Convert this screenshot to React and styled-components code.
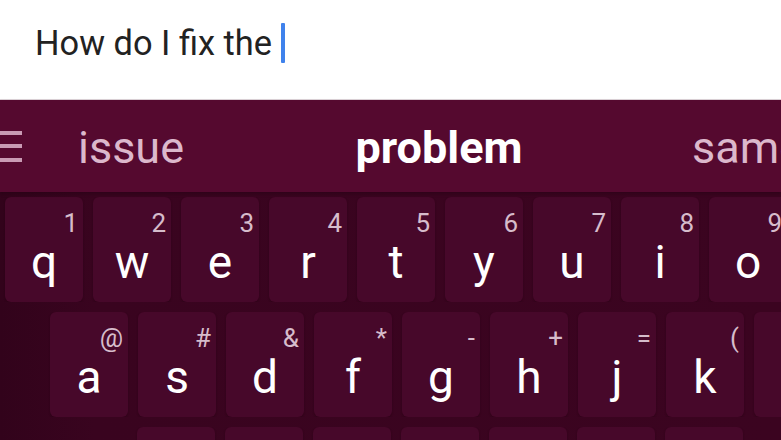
import React from "react";
import styled, { createGlobalStyle } from "styled-components";

const Global = createGlobalStyle`
  html, body { margin: 0; padding: 0; background: #ffffff; }
  body { width: 781px; height: 440px; overflow: hidden; font-family: Roboto, "Noto Sans", "Liberation Sans", sans-serif; }
  #root { width: 781px; height: 440px; }
`;

const Screen = styled.div`
  width: 781px;
  height: 440px;
  display: flex;
  flex-direction: column;
  overflow: hidden;
`;

const InputArea = styled.div`
  flex-shrink: 0;
  box-sizing: border-box;
  border-bottom: 1px solid #ddd3d8;
  height: 100px;
  display: flex;
  align-items: flex-start;
  padding: 23px 0 0 35px;
  background: #ffffff;
`;

const InputText = styled.span`
  font-size: 34.4px;
  line-height: 40px;
  color: #222222;
  white-space: pre;
`;

const Caret = styled.span`
  display: inline-block;
  width: 4px;
  height: 40px;
  margin-left: 9px;
  border-radius: 1px;
  background: #3f82ec;
`;

const SuggestionBar = styled.div`
  height: 92px;
  flex-shrink: 0;
  display: flex;
  align-items: center;
  background: #55092f;
  overflow: hidden;
  box-shadow: 0 2px 3px rgba(30, 0, 15, 0.35);
  position: relative;
  z-index: 1;
`;

const MenuIcon = styled.svg`
  flex-shrink: 0;
  width: 22px;
  height: 32px;
  margin-top: 2px;
`;

const Slots = styled.div`
  display: flex;
  margin-left: -45px;
  padding-top: 4px;
`;

const Slot = styled.div`
  flex: 0 0 ${(p) => p.$width}px;
  box-sizing: border-box;
  padding-left: ${(p) => p.$indent || 0}px;
  text-align: ${(p) => (p.$indent ? "left" : "center")};
  font-size: 45px;
  line-height: 44px;
  white-space: nowrap;
  font-weight: ${(p) => (p.$active ? 700 : 400)};
  color: ${(p) => (p.$active ? "#ffffff" : "#dcb8cc")};
`;

const Keyboard = styled.div`
  flex: 1;
  display: flex;
  flex-direction: column;
  gap: 10px;
  padding-top: 5px;
  background: linear-gradient(90deg, #32031b 0%, #39041f 12%, #3b0420 100%);
`;

const Row = styled.div`
  display: flex;
  gap: 10px;
  padding-left: ${(p) => p.$offset}px;
  overflow: hidden;
  flex-shrink: 0;
`;

const Key = styled.div`
  position: relative;
  flex: 0 0 78px;
  height: 105px;
  box-sizing: border-box;
  border-radius: 6px;
  background: #47082a;
  box-shadow: 0 1px 2px rgba(25, 0, 12, 0.35);
  display: flex;
  justify-content: center;
  padding-top: 42px;
`;

const Letter = styled.span`
  font-size: 46px;
  line-height: 46px;
  color: #ffffff;
`;

const Hint = styled.span`
  position: absolute;
  top: 13px;
  right: 5px;
  font-size: 26px;
  line-height: 26px;
  color: #d6bccb;
`;

const row1 = [
  ["q", "1"], ["w", "2"], ["e", "3"], ["r", "4"], ["t", "5"],
  ["y", "6"], ["u", "7"], ["i", "8"], ["o", "9"], ["p", "0"],
];
const row2 = [
  ["a", "@"], ["s", "#"], ["d", "&"], ["f", "*"], ["g", "-"],
  ["h", "+"], ["j", "="], ["k", "("], ["l", ")"],
];
const row3 = [
  ["z", "_"], ["x", "$"], ["c", "\""], ["v", "'"], ["b", ":"],
  ["n", ";"], ["m", "/"],
];

function KeyRow({ keys, offset }) {
  return (
    <Row $offset={offset}>
      {keys.map(([l, h]) => (
        <Key key={l}>
          <Hint>{h}</Hint>
          <Letter>{l}</Letter>
        </Key>
      ))}
    </Row>
  );
}

export default function App() {
  return (
    <Screen>
      <Global />
      <InputArea>
        <InputText>How do I fix the</InputText>
        <Caret />
      </InputArea>
      <SuggestionBar>
        <MenuIcon viewBox="0 0 22 32">
          <rect x="0" y="0" width="22" height="4" fill="#c99bb4" />
          <rect x="0" y="13" width="22" height="4" fill="#c99bb4" />
          <rect x="0" y="27" width="22" height="4" fill="#c99bb4" />
        </MenuIcon>
        <Slots>
          <Slot $width={308}>issue</Slot>
          <Slot $width={308} $active>problem</Slot>
          <Slot $width={300} $indent={99}>same</Slot>
        </Slots>
      </SuggestionBar>
      <Keyboard>
        <KeyRow keys={row1} offset={5} />
        <KeyRow keys={row2} offset={50} />
        <KeyRow keys={row3} offset={137} />
      </Keyboard>
    </Screen>
  );
}
